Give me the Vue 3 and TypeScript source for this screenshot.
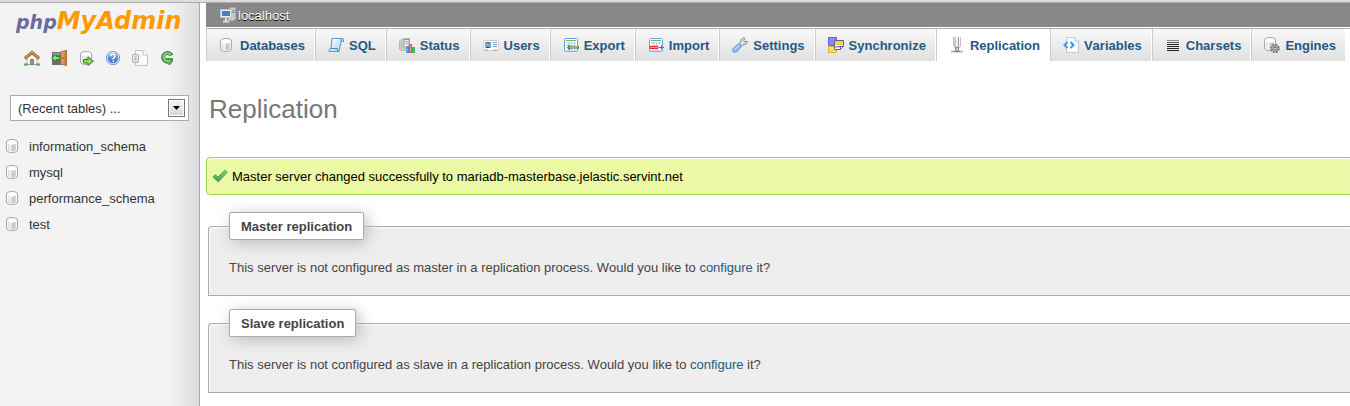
<script setup lang="ts">
import { ref } from 'vue'

interface Tab {
  label: string
  icon: string
}

const tabs: Tab[] = [
  { label: 'Databases', icon: 'db' },
  { label: 'SQL', icon: 'sql' },
  { label: 'Status', icon: 'status' },
  { label: 'Users', icon: 'users' },
  { label: 'Export', icon: 'export' },
  { label: 'Import', icon: 'import' },
  { label: 'Settings', icon: 'settings' },
  { label: 'Synchronize', icon: 'sync' },
  { label: 'Replication', icon: 'replication' },
  { label: 'Variables', icon: 'variables' },
  { label: 'Charsets', icon: 'charsets' },
  { label: 'Engines', icon: 'engines' },
]

const shortcuts: Tab[] = [
  { label: 'Home', icon: 'home' },
  { label: 'Log out', icon: 'logout' },
  { label: 'Query window', icon: 'query' },
  { label: 'phpMyAdmin documentation', icon: 'help' },
  { label: 'Documentation', icon: 'docs' },
  { label: 'Reload navigation frame', icon: 'reload' },
]

const databases: string[] = ['information_schema', 'mysql', 'performance_schema', 'test']
const panels: string[] = ['master', 'slave']
const active = ref('Replication')
const recent = ref('')
const title = (s: string): string => s.charAt(0).toUpperCase() + s.slice(1)
</script>

<template>
  <svg class="defs" aria-hidden="true">
    <defs>
      <linearGradient id="g-cyl"><stop offset="0" stop-color="#dcdcdc" /><stop offset=".3" stop-color="#f4f4f4" /><stop offset=".6" stop-color="#c4c4c4" /><stop offset="1" stop-color="#d8d8d8" /></linearGradient>
      <linearGradient id="g-blue" x2="1" y2="1"><stop offset="0" stop-color="#fff" /><stop offset="1" stop-color="#a9cff5" /></linearGradient>
      <linearGradient id="g-door"><stop offset="0" stop-color="#e9b878" /><stop offset="1" stop-color="#b87432" /></linearGradient>
      <linearGradient id="g-help" x2="0" y2="1"><stop offset="0" stop-color="#7fadea" /><stop offset="1" stop-color="#3f74bd" /></linearGradient>
      <linearGradient id="g-green" x2="0" y2="1"><stop offset="0" stop-color="#8fd08c" /><stop offset="1" stop-color="#3f9b46" /></linearGradient>
    </defs>
    <symbol id="i-db" viewBox="0 0 16 16">
      <path d="M1.500 4C1.500 .7 12.500 .7 12.500 4V12C12.500 15.300 1.500 15.300 1.500 12Z" fill="#fafafa" stroke="#a8a8a8" />
      <path d="M3 5.500C4 7 10 7 11 5.500V12C10 13.800 4 13.800 3 12Z" fill="url(#g-cyl)" />
      <ellipse cx="7" cy="4.200" rx="4.500" ry="1.700" fill="#fff" />
    </symbol>
    <symbol id="i-sql" viewBox="0 0 16 16">
      <path d="M4 1.500H14.500Q15.500 1.500 15.500 3V4.500H13L11 14.500H1Q.5 11.500 3 11.500Z" fill="url(#g-blue)" stroke="#5b93d3" />
      <path d="M13 4.500Q12.500 1.500 14.500 1.500M3 11.500H9.500Q8.500 14 11 14.500" fill="none" stroke="#4f86c8" />
    </symbol>
    <symbol id="i-status" viewBox="0 0 16 16">
      <path d="M.5 4 4 1.500H10.500V11L8 13.500H2L.5 12Z" fill="#d2d2d2" stroke="#b2b2b2" />
      <path d="M5 2.500H10V11H5Z" fill="#eee" stroke="#999" /><path d="M6 4.500H9M6 6.500H9M2.500 4V12" stroke="#aaa" />
      <path d="M7 9H10V16H7Z" fill="#4586ee" /><path d="M10 7H13V16H10Z" fill="#f25036" /><path d="M13 10H16V16H13Z" fill="#42b856" />
      <path d="M8 10V15" stroke="#93bdfb" /><path d="M11.500 8V15" stroke="#ff9875" />
    </symbol>
    <symbol id="i-users" viewBox="0 0 16 16">
      <rect x=".5" y="3.500" width="15" height="10" rx="1" fill="#fff" stroke="#c8ccd2" />
      <path d="M2 5H8V11H2Z" fill="#65a8e8" /><circle cx="5" cy="7" r="1.700" fill="#dda36e" /><path d="M3.400 6.800Q4 4.800 6.700 6.500" stroke="#55351e" fill="none" /><path d="M3 11Q5 8 7 11Z" fill="#274872" />
      <path d="M10 5.500H14M10 7.500H14M10 9.500H14" stroke="#7b9ec7" /><path d="M2 13H5M11 13H14" stroke="#999" />
    </symbol>
    <symbol id="i-sheet" viewBox="0 0 16 16">
      <rect x="1.500" y="1.500" width="13" height="13" rx="1" fill="#fff" stroke="#6f9bdc" />
      <path d="M3 3.500H13" stroke="#72b65c" /><path d="M3 6H13M3 8.500H13M3 11H13M5.500 5V13M8.500 5V13M11.500 5V13" stroke="#b5cbed" /><path d="M2 14H14" stroke="#9bbcf0" />
    </symbol>
    <symbol id="i-export" viewBox="0 0 16 16">
      <use href="#i-sheet" /><path d="M4 10.500 7 7.500V9.500H16V11.500H7V13.500Z" fill="#377e28" /><path d="M6 10.500H15" stroke="#83bd65" />
    </symbol>
    <symbol id="i-import" viewBox="0 0 16 16">
      <use href="#i-sheet" /><path d="M2 9H11V7.500L16 10.500 11 13.500V12H2Z" fill="#fff" /><path d="M2 9.500H10V11.500H2Z" fill="#fb9a9a" stroke="#e62c2c" /><path d="M11 10.500H16M13.500 8.500V12.500" stroke="#e62c2c" />
    </symbol>
    <symbol id="i-settings" viewBox="0 0 16 16">
      <path d="M7.500 7.500 8.500 5Q8.500 1.500 12 .8L13 1.500 11.800 3.500 13 5 15 4 15.500 4.500Q15 8 11 8L9 9.500Z" fill="#dedede" stroke="#909090" />
      <path d="M1.500 11 6.500 6.800Q9 7 9.500 9.500L5 14.500Q2.500 16.500 .8 14.500 0 13 1.500 11Z" fill="#8db3eb" stroke="#6f99dc" /><path d="M2.500 12.500 7 8.500" stroke="#cbdfff" stroke-width="1.500" />
    </symbol>
    <symbol id="i-sync" viewBox="0 0 16 16">
      <path d="M.5 .5H8.500V8.500H.5Z" fill="#8d85ff" stroke="#655fe8" /><path d="M.5 9.500H8.500V15.500H.5Z" fill="#ffda64" stroke="#ddb83f" />
      <path d="M6.500 3.500H15.500V9.500L12.500 12.500H6.500Z" fill="#fff" stroke="#656475" /><path d="M7 4H15V8H7Z" fill="#f3ce67" /><path d="M7 9H14V10.500H7Z" fill="#8f88f5" /><path d="M12.500 12.500V9.500H15" fill="#fff" stroke="#656475" />
    </symbol>
    <symbol id="i-replication" viewBox="0 0 16 16">
      <path d="M4.500 0V8L6 11M11.500 0V9L10 11" fill="none" stroke="#c4c4c4" /><path d="M6 0V10M9.500 0V10" stroke="#999" /><path d="M8 2V12" stroke="#ddd" />
      <path d="M6.500 10.500H9.500V13.500H6.500Z" fill="#ccc" stroke="#888" /><path d="M2 14.500H14" stroke="#b8b8b8" stroke-width="2" /><path d="M5 14.500H11" stroke="#808080" />
    </symbol>
    <symbol id="i-variables" viewBox="0 0 16 16">
      <path d="M3.500 .5H12L15.500 4V15.500H3.500Z" fill="#f9fbfe" stroke="#bcc9da" /><path d="M12 .5V4H15.500" fill="#fff" stroke="#bcc9da" />
      <path d="M4.500 5 1.500 8 4.500 11M7.500 5 10.500 8 7.500 11" fill="none" stroke="#4296ec" stroke-width="2" />
    </symbol>
    <symbol id="i-charsets" viewBox="0 0 16 16">
      <path d="M2 3.500H14" stroke="#888" /><path d="M2 5.500H14" stroke="#555" /><path d="M2 7.500H14M2 9.500H14M2 11.500H14M2 13.500H14" stroke="#222" />
    </symbol>
    <symbol id="i-engines" viewBox="0 0 16 16">
      <use href="#i-db" x="-1" y="-1" /><circle cx="11" cy="11.500" r="4" fill="#bbb" stroke="#777" stroke-width="1.500" stroke-dasharray="2 1.140" /><circle cx="11" cy="11.500" r="3" fill="#ccc" stroke="#888" /><circle cx="11" cy="11.500" r="1.300" fill="#fff" stroke="#555" />
    </symbol>
    <symbol id="i-home" viewBox="0 0 16 16">
      <path d="M3 8 8 3.500 13 8V14.500H3Z" fill="#fafafa" stroke="#b2aba4" /><path d="M6.500 9.500H9.500V14.500H6.500Z" fill="#999" stroke="#777" />
      <path d="M0 14.500H4M12 14.500H16" stroke="#4aa54c" stroke-width="2" /><path d="M.8 8.500 8 2.500 15.200 8.500" fill="none" stroke="#8f5b22" stroke-width="3" /><path d="M1 8.200 8 2.300 15 8.200" fill="none" stroke="#db9b50" stroke-width="1.500" />
    </symbol>
    <symbol id="i-logout" viewBox="0 0 16 16">
      <path d="M1 2H11V15H1Z" fill="#6c706d" /><path d="M2 3H9V5H2Z" fill="#9da19d" /><path d="M10 1.500 15.500 .5V15.500L10 14Z" fill="url(#g-door)" stroke="#ae7033" /><circle cx="11.800" cy="8" r=".8" fill="#704315" />
      <path d="M.5 8 5 4.500V6.500H8.500V9.500H5V11.500Z" fill="#9adb80" stroke="#2f8628" />
    </symbol>
    <symbol id="i-query" viewBox="0 0 16 16">
      <use href="#i-db" x="1" /><path d="M5.500 9.500H10V7L15.500 11.200 10 15.500V13H5.500Z" fill="#9bd361" stroke="#35831d" />
    </symbol>
    <symbol id="i-help" viewBox="0 0 16 16">
      <circle cx="8" cy="8" r="6.700" fill="#deebfb" stroke="#6f9bd5" /><circle cx="8" cy="8" r="5.300" fill="url(#g-help)" />
      <path d="M5.800 6.200Q6 4 8 4.200T10 6.300Q9.700 7.500 8.200 8.500V9.500M8.200 10.700V12" fill="none" stroke="#fff" stroke-width="1.500" />
    </symbol>
    <symbol id="i-docs" viewBox="0 0 16 16">
      <path d="M3.500 .5H11L15.500 5V15.500H3.500Z" fill="#fafafa" stroke="#c4c4c4" /><path d="M11 .5V5H15.500" fill="#fff" stroke="#c4c4c4" />
      <rect x=".5" y="4.500" width="6" height="8" rx="1.500" fill="#eee" stroke="#aaa" /><path d="M3.500 6V11" stroke="#bbb" stroke-width="2" />
    </symbol>
    <symbol id="i-reload" viewBox="0 0 16 16">
      <path d="M12.500 5.500A4.300 4.300 0 1 0 8 11.500H9" fill="none" stroke="#3c8a3d" stroke-width="4" /><path d="M7.500 8.500H13.500V11L10.500 15 7.500 12Z" fill="#55a653" stroke="#3c8a3d" /><path d="M12 5A4 4 0 1 0 8 11.200H11" fill="none" stroke="#8cca86" stroke-width="2" />
    </symbol>
    <symbol id="i-host" viewBox="0 0 16 16">
      <path d="M8.500 2.500 11 .5H15.500V12L13.500 13.500H8.500Z" fill="#ccc" stroke="#aaa" /><path d="M11 3.500H15M11 5.500H15" stroke="#888" /><path d="M13 9H14" stroke="#3b3" />
      <rect x=".5" y="2.500" width="11" height="8" fill="#e5edf5" stroke="#b8c4cf" /><path d="M2 4H10V9H2Z" fill="#4d7ebb" /><path d="M6 11V13.500M3 14.500H9" stroke="#ddd" stroke-width="2" />
    </symbol>
    <symbol id="i-ok" viewBox="0 0 16 16">
      <path d="M.8 9 3 6.500 6 9 13 2 15.300 4.200 6.300 14Z" fill="url(#g-green)" stroke="#5fa85f" />
    </symbol>
  </svg>

  <div class="page">
    <aside class="sidebar">
      <a class="logo" href="#" aria-label="phpMyAdmin"><span class="php">php</span><span class="rest">MyAdmin</span></a>
      <nav class="shortcuts" aria-label="Shortcuts">
        <a v-for="s in shortcuts" :key="s.icon" href="#" :aria-label="s.label"><svg class="icon"><use :href="'#i-' + s.icon" /></svg></a>
      </nav>
      <div class="recent">
        <select v-model="recent" aria-label="Recent tables">
          <option value="">(Recent tables) ...</option>
        </select>
        <span class="arrow" aria-hidden="true"><svg viewBox="0 0 7 4"><path d="M0 0H7L3.500 4Z" /></svg></span>
      </div>
      <ul class="databases">
        <li v-for="d in databases" :key="d">
          <svg class="icon"><use href="#i-db" /></svg><a href="#">{{ d }}</a>
        </li>
      </ul>
    </aside>

    <div class="main">
      <header class="server">
        <svg class="icon"><use href="#i-host" /></svg><a href="#">localhost</a>
      </header>
      <nav class="tabs" aria-label="Server">
        <a v-for="t in tabs" :key="t.label" href="#" :class="{ active: t.label === active }" @click.prevent="active = t.label">
          <svg class="icon"><use :href="'#i-' + t.icon" /></svg>{{ t.label }}
        </a>
      </nav>
      <main>
        <h1>Replication</h1>
        <div class="success" role="status">
          <svg class="icon"><use href="#i-ok" /></svg>Master server changed successfully to mariadb-masterbase.jelastic.servint.net
        </div>
        <fieldset v-for="p in panels" :key="p">
          <legend>{{ title(p) }} replication</legend>
          This server is not configured as {{ p }} in a replication process. Would you like to <a class="link" href="#">configure</a> it?
        </fieldset>
      </main>
    </div>
  </div>
</template>

<style>
body {
  overflow: hidden;
}
</style>

<style scoped>
.defs {
  position: absolute;
  width: 0;
  height: 0;
}
.page {
  display: flex;
  min-height: 100vh;
  box-sizing: border-box;
  border-top: 2px solid #ddd;
  font: 13px/19px "Liberation Sans", Arial, sans-serif;
  font-kerning: none;
  color: #444;
  background: #fff;
}
.icon {
  width: 16px;
  height: 16px;
  flex: none;
}
a {
  color: inherit;
  text-decoration: none;
}
.sidebar {
  width: 200px;
  flex: none;
  box-sizing: border-box;
  border-top: 1px solid #aaa;
  border-right: 1px solid #aaa;
  background: linear-gradient(to right, #f3f3f3 165px, #eaebec 180px, #dadddf);
}
.logo {
  display: flex;
  align-items: baseline;
  height: 36px;
  margin: 0 0 0 16px;
  font: italic bold 24px/36px "DejaVu Sans", sans-serif;
}
.php {
  font-size: 19px;
  color: #6c6a9f;
}
.rest {
  color: #f90;
}
.shortcuts {
  display: flex;
  gap: 11px;
  margin: 11px 0 0 24px;
  height: 16px;
}
.shortcuts a {
  display: flex;
}
.recent {
  display: flex;
  align-items: center;
  box-sizing: border-box;
  height: 26px;
  margin: 29px 10px 0;
  border: 1px solid #aaa;
  background: #fff;
  padding-right: 3px;
}
.recent select {
  flex: 1;
  min-width: 0;
  height: 24px;
  padding: 1px 7px 0;
  border: 0;
  appearance: none;
  background: none;
  font: inherit;
  color: #333;
}
.arrow {
  display: flex;
  align-items: center;
  justify-content: center;
  box-sizing: border-box;
  width: 17px;
  height: 18px;
  border: 1px solid #777;
  background: linear-gradient(#f4f4f4, #d5d5d5);
  box-shadow: inset 0 0 0 1px #fff;
}
.arrow svg {
  width: 7px;
  height: 4px;
}
.databases {
  list-style: none;
  margin: 12px 0 0;
  padding: 0 0 0 5px;
}
.databases li {
  display: flex;
  align-items: center;
  gap: 8px;
  height: 26px;
  color: #333;
}
.main {
  flex: 1;
  min-width: 0;
  overflow: hidden;
  border-top: 1px solid #aaa;
}
.server {
  display: flex;
  align-items: center;
  gap: 2px;
  height: 24px;
  margin-left: 6px;
  padding-left: 14px;
  background: #888;
  color: #fff;
  text-shadow: 0 1px 0 #000;
}
.tabs {
  display: flex;
  margin: 1px 0 0 6px;
  border-top: 1px solid #aaa;
}
.tabs a {
  display: flex;
  align-items: center;
  gap: 5px;
  flex: none;
  height: 32px;
  padding: 0 9px 0 12px;
  border-left: 1px solid #ccc;
  border-right: 1px solid #fff;
  background: linear-gradient(#f8f8f8, #e0e0e0);
  color: #235a81;
  font-weight: bold;
}
.tabs .active {
  background: #fff;
}
h1 {
  margin: 30px 0 0 9px;
  font-size: 26px;
  line-height: 36px;
  font-weight: normal;
  color: #777;
}
.success {
  display: flex;
  align-items: center;
  gap: 4px;
  height: 36px;
  margin: 30px 0 0 6px;
  padding-left: 5px;
  border: 1px solid #a2d246;
  border-right: 0;
  border-radius: 5px 0 0 5px;
  background: #ebf8a4;
  box-shadow: inset 0 1px 1px #fff;
  color: #000;
}
fieldset {
  min-width: 0;
  margin: 17px 0 0 8px;
  padding: 18px 0 18px 20px;
  border: 1px solid #aaa;
  border-right: 0;
  border-radius: 4px 0 0 0;
  background: #eee;
  box-shadow: inset 1px 1px 2px #fff;
}
fieldset + fieldset {
  margin-top: 13px;
}
legend {
  padding: 4px 11px 3px;
  border: 1px solid #aaa;
  border-radius: 2px;
  background: #fff;
  box-shadow: 3px 3px 15px #bbb;
  font-weight: bold;
}
.link {
  color: #235a81;
}
</style>
